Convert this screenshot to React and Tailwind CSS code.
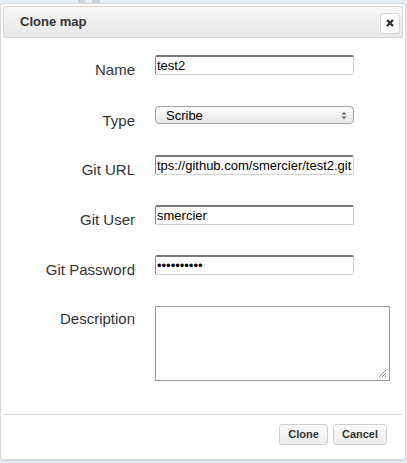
import React from "react";

const font = { fontFamily: '"Liberation Sans", Arial, Helvetica, sans-serif' };

function Row({ label, children, mt }) {
  return (
    <div className={`flex items-start h-[20px] ${mt}`}>
      <div className="w-[132px] h-[20px] text-right text-[15px] leading-[29px] text-[#333]">{label}</div>
      <div className="ml-[20px]">{children}</div>
    </div>
  );
}

function TextInput({ value }) {
  return (
    <div className="w-[199px] h-[20px] bg-white border border-[#d0d0d0] border-t-[#7a7a7a] border-l-[#8a8a8a] border-t-2 rounded-[2px] flex items-center pl-[1px] overflow-hidden">
      <span className="text-[13px] text-black whitespace-nowrap leading-none">{value}</span>
    </div>
  );
}

export default function App() {
  return (
    <div className="w-[407px] h-[463px] bg-[#e9eef3] relative overflow-hidden" style={font}>
      <div className="absolute left-[78px] top-0 w-[7px] h-[3px] bg-[#cfd3d6]" />
      <div className="absolute left-[92px] top-0 w-[8px] h-[3px] bg-[#cfd3d6]" />
      <div className="absolute left-0 top-[3px] w-[406px] h-[457px] bg-white border border-[#d8d8d8] rounded-[3px] shadow-[0_1px_2px_rgba(0,0,0,0.12)] p-[2px] flex flex-col">
        <div className="h-[32px] border border-[#d6d6d6] rounded-[2px] bg-gradient-to-b from-[#f6f6f6] to-[#e8e8e8] flex items-center pl-[16px] pr-[2px]">
          <span className="text-[13px] font-bold text-[#333]">Clone map</span>
          <div className="ml-auto w-[20px] h-[21px] mt-[2px] bg-white border border-[#d6d6d6] rounded-[3px] flex items-center justify-center">
            <svg width="10" height="10" viewBox="0 0 10 10">
              <path d="M2 2 L8 8 M8 2 L2 8" stroke="#333" strokeWidth="2.4" />
            </svg>
          </div>
        </div>
        <div className="flex flex-col pt-[17px]">
          <Row label="Name" mt="">
            <TextInput value="test2" />
          </Row>
          <Row label="Type" mt="mt-[31px]">
            <div className="w-[199px] h-[18px] rounded-[4px] border border-[#a0a0a0] bg-gradient-to-b from-white to-[#e6e6e6] flex items-center pl-[10px] pr-[6px]">
              <span className="text-[13px] text-black leading-none">Scribe</span>
              <svg className="ml-auto" width="6" height="9" viewBox="0 0 6 9">
                <path d="M0.5 3.5 L3 1 L5.5 3.5 Z M0.5 5.5 L3 8 L5.5 5.5 Z" fill="#555" />
              </svg>
            </div>
          </Row>
          <Row label="Git URL" mt="mt-[29px]">
            <TextInput value="tps://github.com/smercier/test2.git" />
          </Row>
          <Row label="Git User" mt="mt-[30px]">
            <TextInput value="smercier" />
          </Row>
          <Row label="Git Password" mt="mt-[30px]">
            <TextInput value="••••••••••" />
          </Row>
          <div className="flex items-start mt-[31px]">
            <div className="w-[132px] text-right text-[15px] text-[#333] leading-[20px] pt-[3px]">Description</div>
            <div className="ml-[20px] w-[235px] h-[75px] border border-[#999] bg-white relative">
              <svg className="absolute right-[2px] bottom-[2px]" width="11" height="11" viewBox="0 0 11 11">
                <path d="M10 3 L3 10 M10 6 L6 10 M10 9 L9 10" stroke="#999" strokeWidth="1" />
              </svg>
            </div>
          </div>
        </div>
        <div className="mt-auto border-t border-[#dcdcdc] h-[43px] flex items-start justify-end pt-[9px] pr-[16px] gap-[5px]">
          <div className="w-[49px] h-[21px] bg-gradient-to-b from-[#fafafa] to-[#ececec] border border-[#d0d0d0] rounded-[3px] flex items-center justify-center text-[11px] font-bold text-[#333]">Clone</div>
          <div className="w-[54px] h-[21px] bg-gradient-to-b from-[#fafafa] to-[#ececec] border border-[#d0d0d0] rounded-[3px] flex items-center justify-center text-[11px] font-bold text-[#333]">Cancel</div>
        </div>
      </div>
    </div>
  );
}
